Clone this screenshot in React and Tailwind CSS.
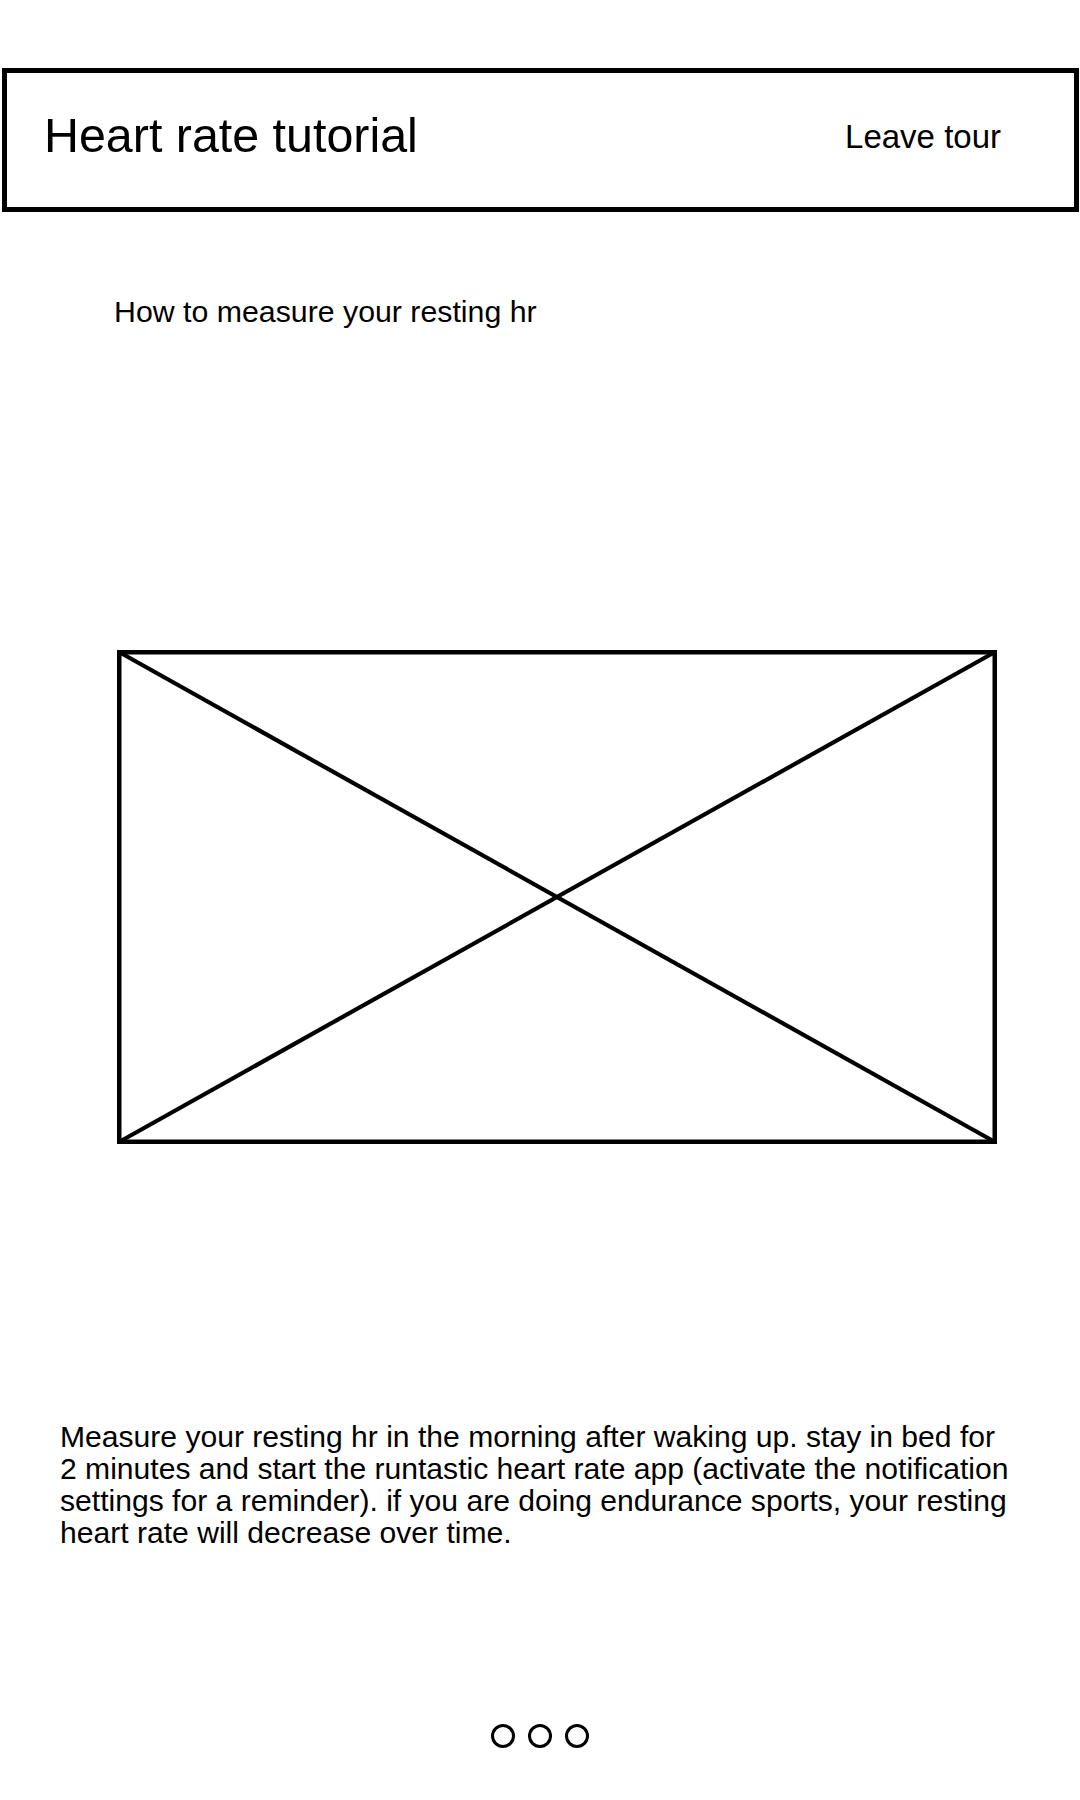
export default function App() {
  return (
    <div
      className="w-[1080px] min-h-[1800px] bg-white text-black pt-[68px]"
      style={{ fontFamily: '"Liberation Sans", Arial, sans-serif' }}
    >
      <header className="ml-[2px] w-[1077px] h-[144px] border-[5px] border-black flex items-center justify-between pl-[37px] pr-[73px]">
        <h1 className="text-[48.4px] leading-none mb-[9px]">Heart rate tutorial</h1>
        <button className="text-[33px] leading-none mb-[7px]">Leave tour</button>
      </header>

      <h2 className="mt-[83px] ml-[114px] text-[30.3px] leading-[34px]">
        How to measure your resting hr
      </h2>

      <div className="mt-[321px] ml-[117px] w-[880px] h-[494px]">
        <svg width="880" height="494" viewBox="0 0 880 494" className="block">
          <rect x="2.25" y="2.25" width="875.5" height="489.5" fill="none" stroke="#000" strokeWidth="4.5" />
          <line x1="2" y1="2" x2="878" y2="492" stroke="#000" strokeWidth="4.2" />
          <line x1="878" y1="2" x2="2" y2="492" stroke="#000" strokeWidth="4.2" />
        </svg>
      </div>

      <p className="mt-[277px] ml-[60px] w-[953px] text-[30.1px] leading-[32px]">
        Measure your resting hr in the morning after waking up. stay in bed for 2 minutes and start the
        runtastic heart rate app (activate the notification settings for a reminder). if you are doing
        endurance sports, your resting heart rate will decrease over time.
      </p>

      <div className="mt-[175px] flex justify-center gap-[13px]">
        <span className="w-[24px] h-[24px] rounded-full border-[3px] border-black" />
        <span className="w-[24px] h-[24px] rounded-full border-[3px] border-black" />
        <span className="w-[24px] h-[24px] rounded-full border-[3px] border-black" />
      </div>
    </div>
  )
}
